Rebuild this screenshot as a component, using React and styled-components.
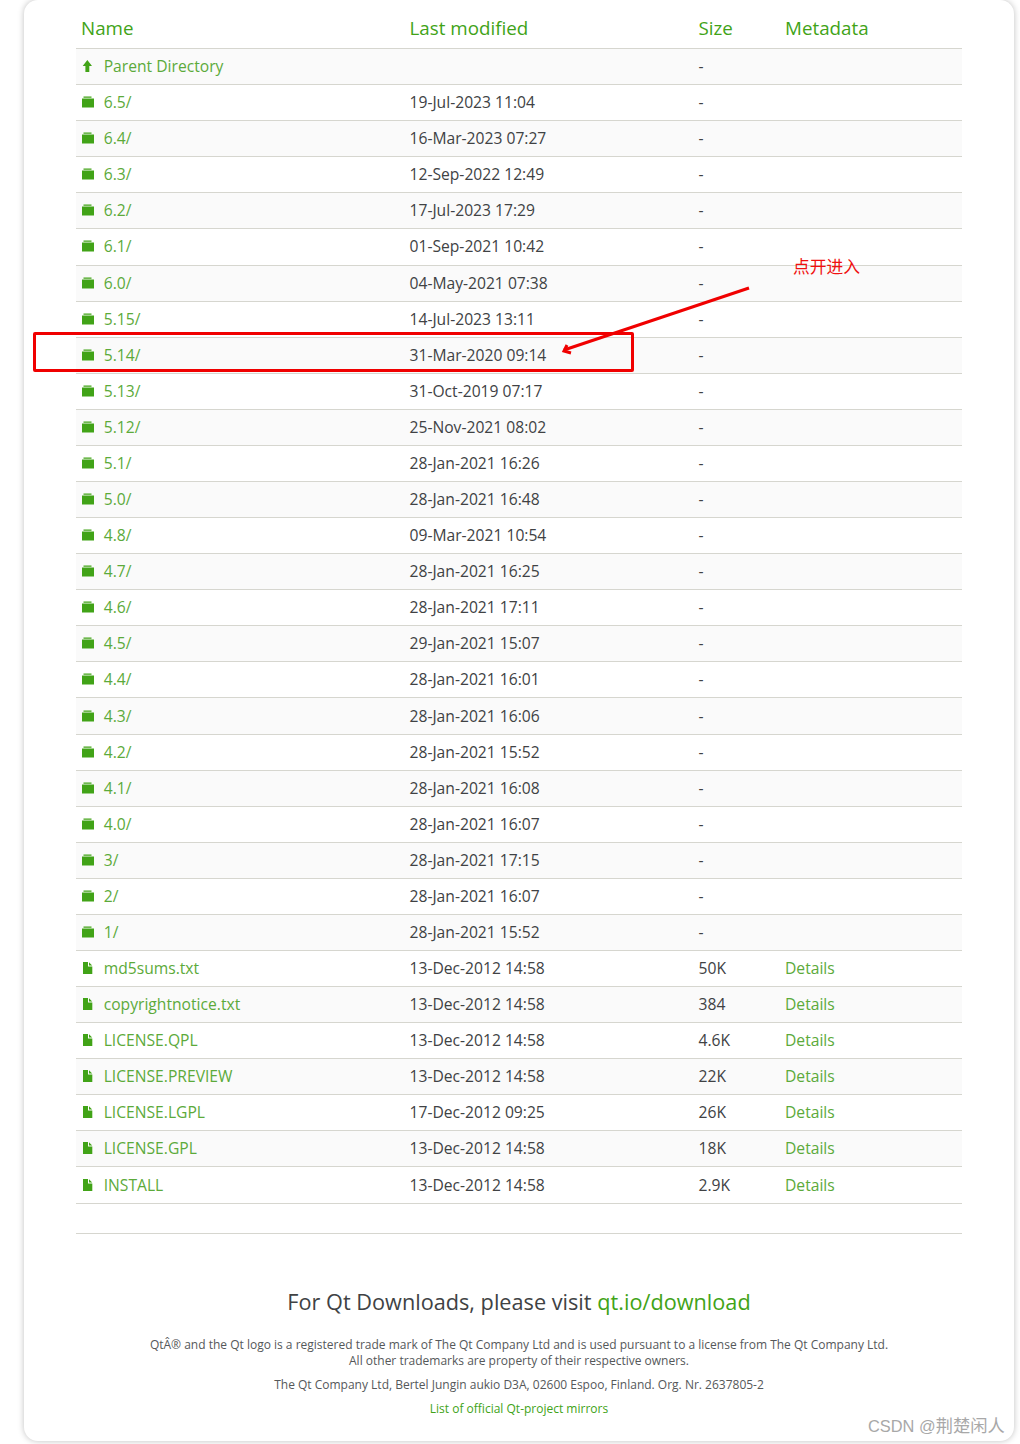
import React from "react";
import styled, { createGlobalStyle } from "styled-components";

const GlobalStyle = createGlobalStyle`
	html, body {
		margin: 0;
		background: #fff;
		font-family: "Open Sans", "Noto Sans", sans-serif;
	}
`;

const Page = styled.div`
	position: relative;
	width: 1020px;
	height: 1444px;
	overflow: hidden;
`;

const Card = styled.div`
	box-sizing: border-box;
	width: 990px;
	height: 1441px;
	margin-left: 24px;
	padding: 12px 52px 0;
	background: #fff;
	border-radius: 14px;
	box-shadow: 0 0 6px rgba(0, 0, 0, 0.25);
`;

const Listing = styled.div`
	width: 886px;
	border-bottom: 1px solid #d6d6cf;
`;

const Row = styled.div`
	display: grid;
	grid-template-columns: 328.5px 289px 86.5px 1fr;
	align-items: center;
	height: 36.08px;
	box-sizing: border-box;
	padding-bottom: 1px;
	border-top: 1px solid #d6d6cf;
	background: ${(p) => (p.$odd ? "#fafafa" : "#fff")};
	font-size: 15.65px;
	color: #404244;
`;

const HeadRow = styled.div`
	display: grid;
	grid-template-columns: 328.5px 289px 86.5px 1fr;
	align-items: center;
	height: 36.07px;
	box-sizing: border-box;
	padding-bottom: 4px;
	font-size: 18.8px;
	color: #41a317;
`;

const Cell = styled.div`
	padding-left: 5px;
	white-space: nowrap;
`;

const NameCell = styled(Cell)`
	display: flex;
	align-items: center;
`;

const IconSlot = styled.span`
	display: flex;
	justify-content: flex-start;
	width: 22.7px;
	padding-left: 1px;
	box-sizing: border-box;
`;

const Link = styled.span`
	color: #5caa3a;
`;

const Rule = styled.div`
	width: 886px;
	height: 1px;
	margin-top: 29.5px;
	background: #d6d6cf;
`;

const Footer = styled.div`
	width: 886px;
	text-align: center;
	color: #55585a;
	font-size: 12px;
	line-height: 16px;
`;

const Visit = styled.div`
	margin-top: 53px;
	margin-bottom: 20px;
	font-size: 21.7px;
	line-height: 30px;
	color: #404244;
`;

const VisitLink = styled.span`
	color: #41a317;
`;

const FooterLine = styled.div`
	margin-bottom: ${(p) => p.$gap || 0}px;
`;

const Mirrors = styled.div`
	color: #41a317;
`;

const HighlightBox = styled.div`
	position: absolute;
	left: 33px;
	top: 332px;
	width: 601px;
	height: 40px;
	box-sizing: border-box;
	border: 3px solid #f00000;
	border-radius: 2px;
`;

const ArrowSvg = styled.svg`
	position: absolute;
	left: 550px;
	top: 280px;
`;

const Note = styled.div`
	position: absolute;
	left: 793px;
	top: 256px;
	font-family: "Noto Sans CJK SC", sans-serif;
	font-size: 16.8px;
	line-height: 20px;
	color: #f01010;
`;

const Watermark = styled.div`
	position: absolute;
	left: 868px;
	top: 1414px;
	font-family: "Liberation Sans", "Noto Sans CJK SC", sans-serif;
	font-size: 16.4px;
	line-height: 24px;
	color: #a8a8a8;
	white-space: nowrap;
`;

const WatermarkName = styled.span`
	font-size: 17.3px;
`;

const ArrowIcon = () => (
	<svg width="12" height="12" viewBox="0 0 12 12">
		<path fill="#41a317" d="M5.35 0 10 6H7.3V12H3.4V6H.7z" />
	</svg>
);

const FolderIcon = () => (
	<svg width="12" height="12" viewBox="0 0 12 12">
		<path fill="#41a317" d="M1.5.6h8v1.1h-8zM0 2.4h12v9H0z" />
	</svg>
);

const FileIcon = () => (
	<svg width="12" height="12" viewBox="0 0 12 12">
		<path fill="#41a317" d="M1 .1h5v4.3h4.3v7.5H1zM7 .3 10.2 3.4H7z" />
	</svg>
);

const folders = [
	["6.5/", "19-Jul-2023 11:04"],
	["6.4/", "16-Mar-2023 07:27"],
	["6.3/", "12-Sep-2022 12:49"],
	["6.2/", "17-Jul-2023 17:29"],
	["6.1/", "01-Sep-2021 10:42"],
	["6.0/", "04-May-2021 07:38"],
	["5.15/", "14-Jul-2023 13:11"],
	["5.14/", "31-Mar-2020 09:14"],
	["5.13/", "31-Oct-2019 07:17"],
	["5.12/", "25-Nov-2021 08:02"],
	["5.1/", "28-Jan-2021 16:26"],
	["5.0/", "28-Jan-2021 16:48"],
	["4.8/", "09-Mar-2021 10:54"],
	["4.7/", "28-Jan-2021 16:25"],
	["4.6/", "28-Jan-2021 17:11"],
	["4.5/", "29-Jan-2021 15:07"],
	["4.4/", "28-Jan-2021 16:01"],
	["4.3/", "28-Jan-2021 16:06"],
	["4.2/", "28-Jan-2021 15:52"],
	["4.1/", "28-Jan-2021 16:08"],
	["4.0/", "28-Jan-2021 16:07"],
	["3/", "28-Jan-2021 17:15"],
	["2/", "28-Jan-2021 16:07"],
	["1/", "28-Jan-2021 15:52"],
];

const files = [
	["md5sums.txt", "13-Dec-2012 14:58", "50K"],
	["copyrightnotice.txt", "13-Dec-2012 14:58", "384"],
	["LICENSE.QPL", "13-Dec-2012 14:58", "4.6K"],
	["LICENSE.PREVIEW", "13-Dec-2012 14:58", "22K"],
	["LICENSE.LGPL", "17-Dec-2012 09:25", "26K"],
	["LICENSE.GPL", "13-Dec-2012 14:58", "18K"],
	["INSTALL", "13-Dec-2012 14:58", "2.9K"],
];

const rows = [
	{ icon: <ArrowIcon />, name: "Parent Directory", date: "", size: "-" },
	...folders.map(([name, date]) => ({ icon: <FolderIcon />, name, date, size: "-" })),
	...files.map(([name, date, size]) => ({ icon: <FileIcon />, name, date, size, meta: "Details" })),
];

const App = () => (
	<Page>
		<GlobalStyle />
		<Card>
			<Listing>
				<HeadRow>
					<Cell>Name</Cell>
					<Cell>Last modified</Cell>
					<Cell>Size</Cell>
					<Cell>Metadata</Cell>
				</HeadRow>
				{rows.map((row, i) => (
					<Row key={row.name} $odd={i % 2 === 0}>
						<NameCell>
							<IconSlot>{row.icon}</IconSlot>
							<Link>{row.name}</Link>
						</NameCell>
						<Cell>{row.date}</Cell>
						<Cell>{row.size}</Cell>
						<Cell>{row.meta && <Link>{row.meta}</Link>}</Cell>
					</Row>
				))}
			</Listing>
			<Rule />
			<Footer>
				<Visit>
					For Qt Downloads, please visit <VisitLink>qt.io/download</VisitLink>
				</Visit>
				<FooterLine>QtÂ® and the Qt logo is a registered trade mark of The Qt Company Ltd and is used pursuant to a license from The Qt Company Ltd.</FooterLine>
				<FooterLine $gap={8}>All other trademarks are property of their respective owners.</FooterLine>
				<FooterLine $gap={8}>The Qt Company Ltd, Bertel Jungin aukio D3A, 02600 Espoo, Finland. Org. Nr. 2637805-2</FooterLine>
				<Mirrors>List of official Qt-project mirrors</Mirrors>
			</Footer>
		</Card>
		<HighlightBox />
		<ArrowSvg width="210" height="80" viewBox="0 0 210 80">
			<path d="M199 8 14 70" stroke="#f00000" strokeWidth="3" fill="none" />
			<path d="M17 65 14 71 21 73" stroke="#f00000" strokeWidth="3" fill="none" />
		</ArrowSvg>
		<Note>点开进入</Note>
		<Watermark>
			CSDN @<WatermarkName>荆楚闲人</WatermarkName>
		</Watermark>
	</Page>
);

export default App;
